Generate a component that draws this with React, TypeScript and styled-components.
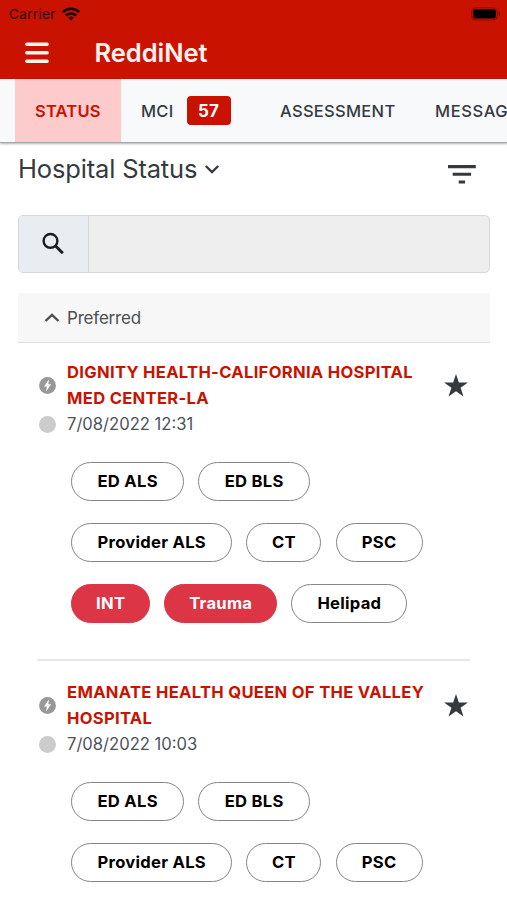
import React from "react";
import styled, { createGlobalStyle } from "styled-components";

const GlobalStyle = createGlobalStyle`
  * { box-sizing: border-box; }
  html, body { margin: 0; padding: 0; height: 100%; overflow: hidden; }
  body { font-family: Inter, "Liberation Sans", sans-serif; color: #343a40; background: #fff; }
  button { font: inherit; color: inherit; background: none; border: 0; padding: 0; }
  h1, h2, h3, p { margin: 0; font-weight: inherit; }
  svg { display: block; flex: none; }
`;

const Screen = styled.div`
  width: 507px;
  height: 900px;
  overflow: hidden;
  background: #fff;
`;

const TopArea = styled.header`
  height: 79px;
  background: #ca1200;
`;

const StatusBar = styled.div`
  height: 27px;
  padding: 0 6px 0 9px;
  display: flex;
  align-items: center;
  color: #2c0400;
`;

const Carrier = styled.span`
  font-size: 13.5px;
  line-height: 28px;
  letter-spacing: 0.35px;
  margin-right: 6px;
`;

const Battery = styled.svg`
  margin-left: auto;
`;

const AppBar = styled.div`
  height: 52px;
  display: flex;
  align-items: center;
  padding-left: 25px;
  color: #fff3f0;
`;

const AppTitle = styled.h1`
  margin-left: 45.5px;
  font-size: 25.5px;
  font-weight: 600;
  line-height: 52px;
  letter-spacing: -0.05px;
`;

const Tabs = styled.nav`
  height: 64px;
  padding-left: 15px;
  display: flex;
  overflow: hidden;
  background: #f8f9fb;
  border-bottom: 1px solid #a6a8aa;
  box-shadow: 0 1px 2px rgba(0, 0, 0, 0.3);
`;

const Tab = styled.button<{ $width: number; $active?: boolean; $tracking?: number }>`
  flex: none;
  width: ${(p) => p.$width}px;
  height: 63px;
  padding-left: 20px;
  display: flex;
  align-items: center;
  white-space: nowrap;
  font-size: 16.5px;
  font-weight: ${(p) => (p.$active ? 600 : 500)};
  letter-spacing: ${(p) => p.$tracking ?? 0.3}px;
  color: ${(p) => (p.$active ? "#ca1200" : "#343a40")};
  background: ${(p) => (p.$active ? "#fdcbcb" : "transparent")};
`;

const CountBadge = styled.span`
  width: 44px;
  height: 29px;
  margin-left: 13px;
  border-radius: 4px;
  background: #ca1200;
  color: #fff;
  font-weight: 700;
  font-size: 17px;
  line-height: 31px;
  text-align: center;
`;

const PageHead = styled.div`
  height: 72px;
  padding: 10px 31px 0 18px;
  display: flex;
  justify-content: space-between;
  align-items: flex-start;
`;

const PageTitle = styled.h2`
  display: flex;
  align-items: center;
  gap: 7px;
  font-size: 25.5px;
  line-height: 32px;
  letter-spacing: -0.16px;
`;

const FilterButton = styled.button`
  margin-top: 12px;
`;

const SearchBox = styled.div`
  height: 58px;
  margin: 0 17px 0 18px;
  display: flex;
  overflow: hidden;
  border: 1px solid #d3d8dc;
  border-radius: 5px;
  background: #eeeeee;
`;

const SearchIcon = styled.span`
  width: 70px;
  display: flex;
  align-items: center;
  padding-left: 23px;
  border-right: 1px solid #d3d8dc;
  background: #e9edf1;
  color: #1b1e20;
`;

const GroupHeader = styled.button`
  width: 472px;
  height: 50px;
  margin: 20px 17px 0 18px;
  padding-left: 26px;
  display: flex;
  align-items: center;
  gap: 7px;
  background: #f7f7f7;
  border-bottom: 1px solid #dee2e6;
  font-size: 17px;
  letter-spacing: -0.2px;
  color: #4c4f52;
`;

const Hospital = styled.article`
  height: 318px;
  margin: 0 37px;
  padding-top: 17px;
  border-bottom: 2px solid #e6e6e6;

  & + & {
    height: 320px;
    padding-top: 19px;
  }
`;

const Summary = styled.div`
  display: grid;
  grid-template-columns: 30px 377px 24px;
`;

const Name = styled.h3`
  position: relative;
  font-size: 16.6px;
  line-height: 25.7px;
  font-weight: 650;
  letter-spacing: 0.3px;
  color: #ca1200;
  white-space: pre-line;
`;

const IconCell = styled.span`
  padding-left: 2px;
  display: flex;
  align-items: center;
`;

const StarCell = styled.span`
  display: flex;
  align-items: center;
  color: #343a40;
`;

const Dot = styled.span`
  width: 17px;
  height: 17px;
  border-radius: 50%;
  background: #cccccc;
`;

const Updated = styled.p`
  font-size: 16.6px;
  line-height: 26px;
  color: #4d5257;
`;

const Pills = styled.div`
  margin: 25px 0 0 34.4px;
  display: grid;
  gap: 22px;
`;

const PillRow = styled.div`
  display: flex;
  gap: 14.3px;
`;

const Pill = styled.button<{ $width: number; $alert?: boolean }>`
  width: ${(p) => p.$width}px;
  height: 39px;
  border-radius: 20px;
  border: 1px solid ${(p) => (p.$alert ? "#dc3545" : "#858585")};
  background: ${(p) => (p.$alert ? "#dc3545" : "#fff")};
  color: ${(p) => (p.$alert ? "#fff" : "#000")};
  font-size: 16.6px;
  font-weight: 650;
  letter-spacing: 0.28px;
  line-height: 37px;
  text-align: center;
  white-space: nowrap;
`;

const MenuIcon = () => (
  <svg width="24" height="22" viewBox="0 0 24 22" stroke="currentColor" strokeWidth="3.4" strokeLinecap="round">
    <path d="M1.8 2.2h20.4M1.8 10.8h20.4M1.8 19.2h20.4" />
  </svg>
);

const WifiIcon = () => (
  <svg width="18" height="14" viewBox="0 0 18 14" fill="none" stroke="#160200" strokeWidth="2.5">
    <path d="M0.9 5.1a11.6 11.6 0 0 1 16.2 0" />
    <path d="M3.9 8.5a7.3 7.3 0 0 1 10.2 0" />
    <path d="M9 13.6 6.2 10.8a4 4 0 0 1 5.6 0z" fill="#160200" stroke="none" />
  </svg>
);

const BatteryIcon = () => (
  <Battery width="30" height="14" viewBox="0 0 30 14">
    <rect x="0.8" y="0.8" width="25.4" height="12.2" rx="3.4" fill="none" stroke="#8c0d00" />
    <rect x="2.2" y="2.2" width="22.6" height="9.4" rx="1.8" fill="#000" />
    <path d="M27.6 4.8v4.4a2.3 2.3 0 0 0 0-4.4" fill="#710a00" />
  </Battery>
);

const Chevron = ({ up }: { up?: boolean }) => (
  <svg width="16" height="10" viewBox="0 0 16 10" fill="none" stroke="currentColor" strokeWidth="2.4">
    <path d={up ? "M1.5 8 8 1.8 14.5 8" : "M1.8 2 8 8l6.2-6"} />
  </svg>
);

const FilterIcon = () => (
  <svg width="28" height="20" viewBox="0 0 28 20" fill="#343a40">
    <path d="M0 .1h27.8v3.1H0zM4.7 7.7h18.4v3.1H4.7zM10.7 15.4h6.4v3.1h-6.4z" />
  </svg>
);

const MagnifierIcon = () => (
  <svg width="24" height="24" viewBox="0 0 24 24" fill="none" stroke="currentColor" strokeWidth="2.4">
    <circle cx="8.5" cy="8.9" r="6.9" />
    <path d="m13.4 13.8 7.4 7.4" strokeWidth="3" />
  </svg>
);

const BoltIcon = () => (
  <svg width="17" height="17" viewBox="0 0 17 17">
    <circle cx="8.5" cy="8.5" r="8.4" fill="#989898" />
    <path d="M9.9 2.4 5 9.4h2.9l-.8 5.2 5-7.3H9.3z" fill="#fff" />
  </svg>
);

const StarIcon = () => (
  <svg width="24" height="23" viewBox="0 0 24 23" fill="currentColor">
    <path d="m12 0 2.83 8.4 9.17.05-7.4 5.2L19.5 22.5 12 17.3l-7.5 5.2 2.9-8.85L0 8.45l9.17-.05z" />
  </svg>
);

type PillData = { label: string; width: number; alert?: boolean };

const firstRows: PillData[][] = [
  [{ label: "ED ALS", width: 112.5 }, { label: "ED BLS", width: 112 }],
  [{ label: "Provider ALS", width: 160.7 }, { label: "CT", width: 75 }, { label: "PSC", width: 87 }],
];
const alertRow: PillData[] = [
  { label: "INT", width: 78.7, alert: true },
  { label: "Trauma", width: 112.7, alert: true },
  { label: "Helipad", width: 116 },
];

const hospitals = [
  { name: "DIGNITY HEALTH-CALIFORNIA HOSPITAL\nMED CENTER-LA", updated: "7/08/2022 12:31", rows: [...firstRows, alertRow] },
  { name: "EMANATE HEALTH QUEEN OF THE VALLEY\nHOSPITAL", updated: "7/08/2022 10:03", rows: firstRows },
];

export default function App() {
  return (
    <>
      <GlobalStyle />
      <Screen>
        <TopArea>
          <StatusBar>
            <Carrier>Carrier</Carrier>
            <WifiIcon />
            <BatteryIcon />
          </StatusBar>
          <AppBar>
            <MenuIcon />
            <AppTitle>ReddiNet</AppTitle>
          </AppBar>
        </TopArea>
        <Tabs>
          <Tab $width={106} $active $tracking={0.2}>STATUS</Tab>
          <Tab $width={139}>
            MCI <CountBadge>57</CountBadge>
          </Tab>
          <Tab $width={155}>ASSESSMENT</Tab>
          <Tab $width={140} $tracking={0.6}>MESSAGES</Tab>
        </Tabs>
        <PageHead>
          <PageTitle>
            Hospital Status <Chevron />
          </PageTitle>
          <FilterButton aria-label="Filter">
            <FilterIcon />
          </FilterButton>
        </PageHead>
        <SearchBox>
          <SearchIcon>
            <MagnifierIcon />
          </SearchIcon>
        </SearchBox>
        <GroupHeader>
          <Chevron up />
          Preferred
        </GroupHeader>
        {hospitals.map((h) => (
          <Hospital key={h.name}>
            <Summary>
              <IconCell><BoltIcon /></IconCell>
              <Name>{h.name}</Name>
              <StarCell><StarIcon /></StarCell>
              <IconCell><Dot /></IconCell>
              <Updated>{h.updated}</Updated>
            </Summary>
            <Pills>
              {h.rows.map((row, i) => (
                <PillRow key={i}>
                  {row.map((p) => (
                    <Pill key={p.label} $width={p.width} $alert={p.alert}>{p.label}</Pill>
                  ))}
                </PillRow>
              ))}
            </Pills>
          </Hospital>
        ))}
      </Screen>
    </>
  );
}
